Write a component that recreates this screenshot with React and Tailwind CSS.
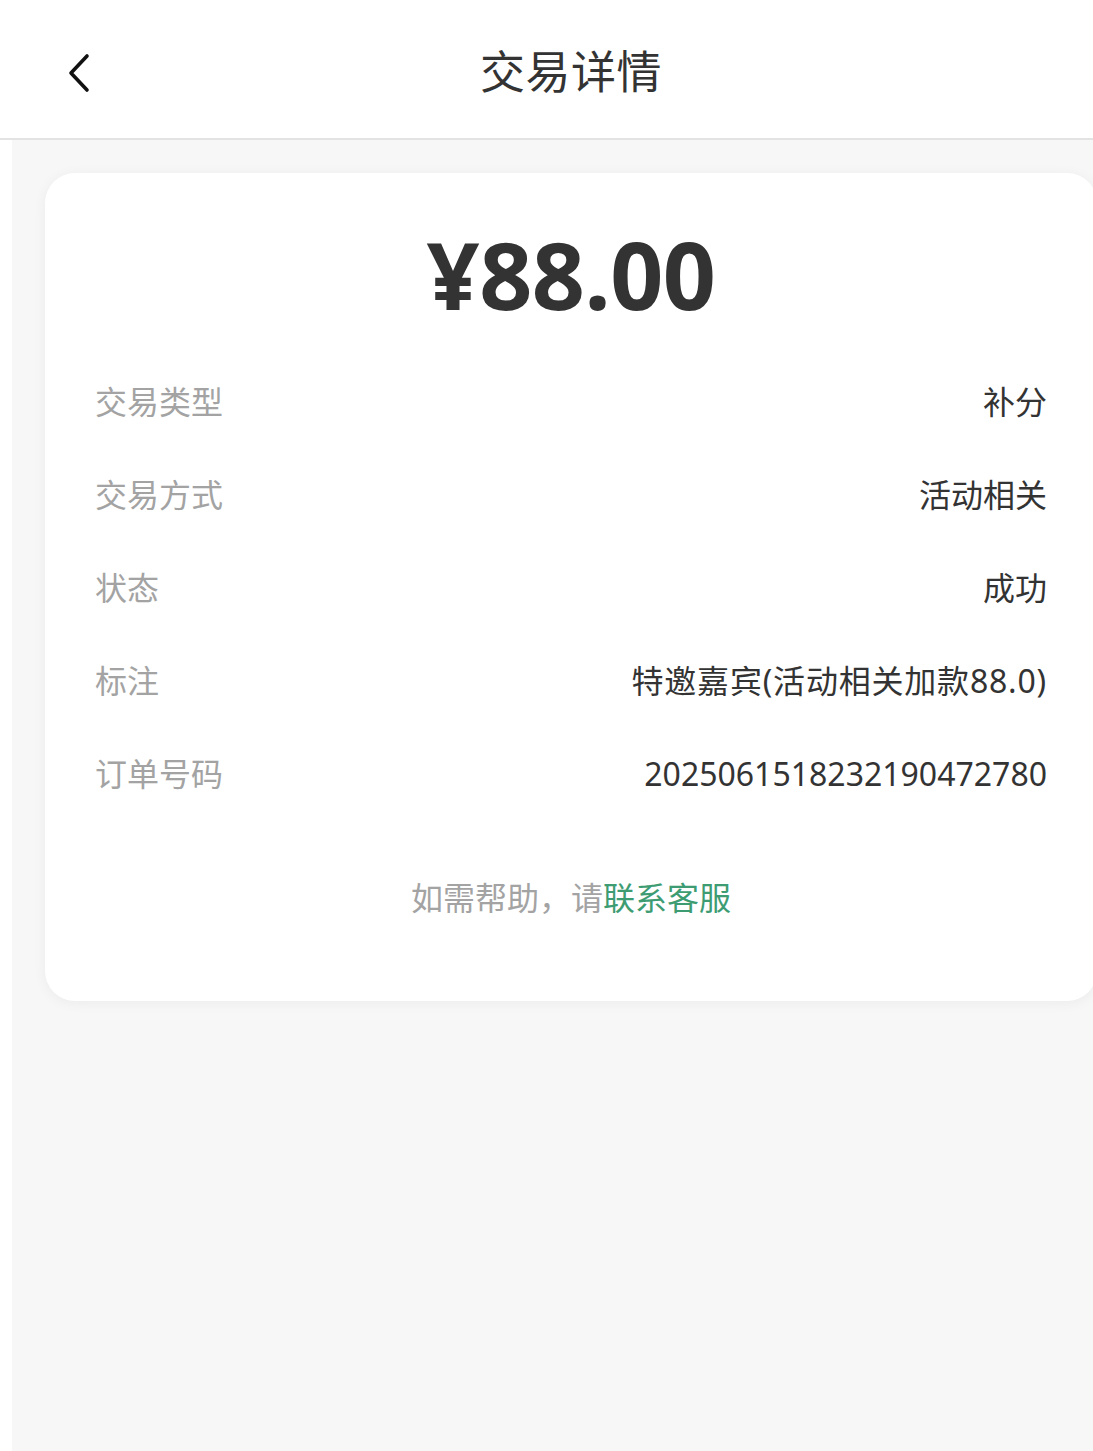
export default function App() {
  const rows = [
    ["交易类型", "补分"],
    ["交易方式", "活动相关"],
    ["状态", "成功"],
    ["标注", "特邀嘉宾(活动相关加款88.0)"],
    ["订单号码", "2025061518232190472780"],
  ];
  const font = { fontFamily: '"Noto Sans", "Noto Sans CJK SC", sans-serif' };
  return (
    <div className="w-[1093px] h-[1451px] overflow-hidden bg-white" style={font}>
      <div className="ml-[12px] w-[1118px] h-[1451px] flex flex-col bg-[#f7f7f7]">
        <div className="h-[140px] shrink-0 bg-white border-b-2 border-[#e3e3e3] relative flex items-center justify-center -ml-[12px] pl-[12px] w-[1130px]">
          <div className="absolute left-[64px] top-[52px] w-[30px] h-[42px] flex items-center justify-center">
            <svg width="30" height="42" viewBox="0 0 30 42" fill="none">
              <path d="M23 4 L7 21 L23 38" stroke="#111" strokeWidth="3.6" strokeLinecap="round" strokeLinejoin="round" />
            </svg>
          </div>
          <div className="text-[45px] leading-none text-[#333] tracking-[0.5px] mt-[4px]">交易详情</div>
        </div>
        <div className="mx-[33px] mt-[33px] bg-white rounded-[30px] shadow-[0_2px_14px_rgba(0,0,0,0.05)] pt-[46px] pb-[79px] px-[50px]">
          <div className="h-[110px] flex items-center justify-center text-[93px] font-bold text-[#333] leading-none tracking-[-0.5px]">
            ¥88.00
          </div>
          <div className="mt-[26px] flex flex-col">
            {rows.map(([k, v]) => (
              <div key={k} className="h-[93px] flex items-center justify-between text-[32px] leading-none">
                <span className="text-[#a3a3a3]">{k}</span>
                <span className={k === "标注" ? "text-[#333] tracking-[0.8px]" : "text-[#333]"}>{v}</span>
              </div>
            ))}
          </div>
          <div className="mt-[54px] h-[48px] flex items-center justify-center text-[32px] leading-none">
            <span className="text-[#a3a3a3]">如需帮助，请</span>
            <span className="text-[#3d9c72]">联系客服</span>
          </div>
        </div>
      </div>
    </div>
  );
}
